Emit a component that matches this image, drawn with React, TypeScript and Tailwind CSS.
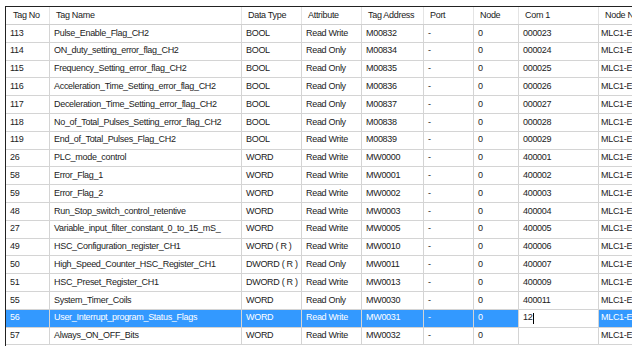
import React from "react";

type Row = {
  no: string;
  name: string;
  type: string;
  attr: string;
  addr: string;
  com: string;
};

const rows: Row[] = [
  { no: "113", name: "Pulse_Enable_Flag_CH2", type: "BOOL", attr: "Read Write", addr: "M00832", com: "000023" },
  { no: "114", name: "ON_duty_setting_error_flag_CH2", type: "BOOL", attr: "Read Only", addr: "M00834", com: "000024" },
  { no: "115", name: "Frequency_Setting_error_flag_CH2", type: "BOOL", attr: "Read Only", addr: "M00835", com: "000025" },
  { no: "116", name: "Acceleration_Time_Setting_error_flag_CH2", type: "BOOL", attr: "Read Only", addr: "M00836", com: "000026" },
  { no: "117", name: "Deceleration_Time_Setting_error_flag_CH2", type: "BOOL", attr: "Read Only", addr: "M00837", com: "000027" },
  { no: "118", name: "No_of_Total_Pulses_Setting_error_flag_CH2", type: "BOOL", attr: "Read Only", addr: "M00838", com: "000028" },
  { no: "119", name: "End_of_Total_Pulses_Flag_CH2", type: "BOOL", attr: "Read Write", addr: "M00839", com: "000029" },
  { no: "26", name: "PLC_mode_control", type: "WORD", attr: "Read Write", addr: "MW0000", com: "400001" },
  { no: "58", name: "Error_Flag_1", type: "WORD", attr: "Read Write", addr: "MW0001", com: "400002" },
  { no: "59", name: "Error_Flag_2", type: "WORD", attr: "Read Write", addr: "MW0002", com: "400003" },
  { no: "48", name: "Run_Stop_switch_control_retentive", type: "WORD", attr: "Read Write", addr: "MW0003", com: "400004" },
  { no: "27", name: "Variable_input_filter_constant_0_to_15_mS_", type: "WORD", attr: "Read Write", addr: "MW0005", com: "400005" },
  { no: "49", name: "HSC_Configuration_register_CH1", type: "WORD ( R )", attr: "Read Write", addr: "MW0010", com: "400006" },
  { no: "50", name: "High_Speed_Counter_HSC_Register_CH1", type: "DWORD ( R )", attr: "Read Only", addr: "MW0011", com: "400007" },
  { no: "51", name: "HSC_Preset_Register_CH1", type: "DWORD ( R )", attr: "Read Write", addr: "MW0013", com: "400009" },
  { no: "55", name: "System_Timer_Coils", type: "WORD", attr: "Read Only", addr: "MW0030", com: "400011" },
  { no: "56", name: "User_Interrupt_program_Status_Flags", type: "WORD", attr: "Read Write", addr: "MW0031", com: "12" },
  { no: "57", name: "Always_ON_OFF_Bits", type: "WORD", attr: "Read Write", addr: "MW0032", com: "" },
];

const SELECTED = 16;

const widths = ["w-[44px]", "w-[192px]", "w-[60px]", "w-[60px]", "w-[62px]", "w-[50px]", "w-[45px]", "w-[80px]", "w-[60px]"];
const headers = ["Tag No", "Tag Name", "Data Type", "Attribute", "Tag Address", "Port", "Node", "Com 1", "Node N"];

export default function App() {
  return (
    <div className="w-[644px] h-[350px] bg-white overflow-hidden pt-[6px] pl-[5px] font-['Liberation_Sans',Arial,sans-serif] text-[9px] tracking-[-0.3px] text-[#222]">
      <div className="w-[627px] h-[340px] overflow-hidden border-l border-t border-[#222]">
        <div className="flex h-[18px] border-b border-[#cfcfcf] w-max">
          {headers.map((h, i) => (
            <div
              key={h}
              className={`${widths[i]} shrink-0 flex items-center border-r border-[#e4e4e4] whitespace-nowrap overflow-hidden ${i === 0 ? "pl-[7px]" : "pl-[6px]"}`}
            >
              {h}
            </div>
          ))}
        </div>
        {rows.map((r, idx) => {
          const sel = idx === SELECTED;
          const cells = [r.no, r.name, r.type, r.attr, r.addr, "-", "0", r.com, "MLC1-EIP"];
          return (
            <div key={r.no} className="flex h-[17.8px] w-max">
              {cells.map((c, i) => {
                const editing = sel && i === 7;
                const bg = sel && !editing ? "bg-[#3399ff] text-white" : "bg-white";
                return (
                  <div
                    key={i}
                    className={`${widths[i]} ${bg} shrink-0 flex items-center border-r border-b border-[#d4d4d4] whitespace-nowrap overflow-hidden ${i === 8 ? "pl-[2px]" : "pl-[4px]"}`}
                  >
                    {c}
                    {editing && <span className="inline-block w-px h-[11px] bg-black ml-px" />}
                  </div>
                );
              })}
            </div>
          );
        })}
      </div>
    </div>
  );
}
